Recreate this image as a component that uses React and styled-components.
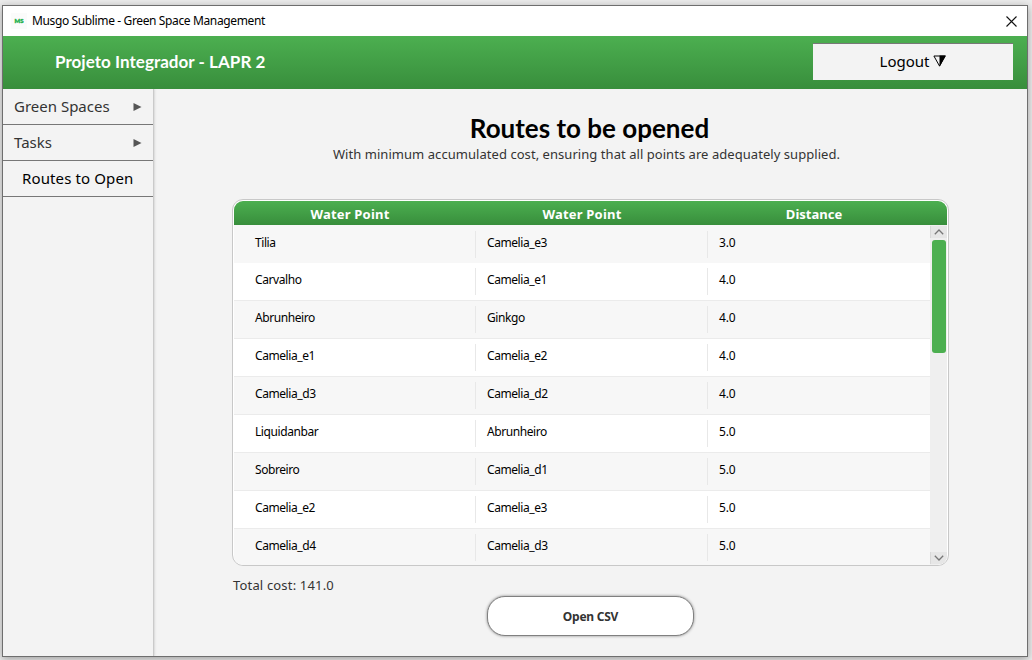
import React from "react";
import styled, { createGlobalStyle } from "styled-components";

const GlobalStyle = createGlobalStyle`
  * { box-sizing: border-box; }
  body {
    margin: 0;
    background: #ececec;
    font-family: "Noto Sans", "Open Sans", sans-serif;
    color: #000;
    overflow: hidden;
  }
`;

const Desktop = styled.div`
  width: 1032px;
  height: 660px;
  padding: 5px 4px 3px 2px;
  overflow: hidden;
`;

const Window = styled.div`
  width: 1026px;
  height: 652px;
  border: 1px solid #6e6e6e;
  background: #f3f3f3;
  box-shadow: 0 2px 8px rgba(0, 0, 0, 0.34);
  display: flex;
  flex-direction: column;
`;

const TitleBar = styled.div`
  height: 30px;
  flex: none;
  background: #fff;
  display: flex;
  align-items: center;
  padding: 0 10px 0 8px;
`;

const AppMark = styled.span`
  width: 16px;
  height: 16px;
  background: #fbfbfb;
  color: #22b04c;
  font: 900 6px/16px Lato, sans-serif;
  -webkit-text-stroke: 0.4px #22b04c;
  text-align: center;
`;

const WindowTitle = styled.span`
  margin-left: 5px;
  font-size: 12px;
  line-height: 16px;
  letter-spacing: -0.37px;
  flex: 1;
  white-space: nowrap;
`;

const Header = styled.header`
  height: 53px;
  flex: none;
  display: flex;
  align-items: center;
  justify-content: space-between;
  padding: 0 14px 0 52px;
  background: linear-gradient(#4caf50, #388e3c);
`;

const Brand = styled.div`
  color: #fff;
  font: 700 17px/22px Lato, sans-serif;
  letter-spacing: 0.04px;
  margin-bottom: 1px;
  white-space: nowrap;
`;

const LogoutButton = styled.button`
  width: 200px;
  height: 37px;
  border: 0;
  border-top: 1px solid #777;
  background: #f3f3f3;
  padding: 0 0 2px;
  margin-bottom: 2px;
  display: flex;
  align-items: center;
  justify-content: center;
  gap: 4px;
  font: 400 15px/20px "Noto Sans", sans-serif;
  color: #000;
`;

const Body = styled.div`
  flex: 1;
  min-height: 0;
  display: flex;
`;

const Sidebar = styled.nav`
  width: 150px;
  flex: none;
  box-shadow: 1px 0 1px #cacaca, 2px 0 2px #dedede;
  clip-path: inset(0 -5px 0 0);
`;

const MenuItem = styled.div`
  height: 36px;
  border-bottom: 1px solid #777;
  display: flex;
  align-items: center;
  justify-content: space-between;
  padding: 0 11px 0 ${(p) => (p.$active ? 19 : 11)}px;
  color: ${(p) => (p.$active ? "#000" : "#333")};
  white-space: nowrap;
`;

const MenuLabel = styled.span`
  margin-bottom: 2px;
  font-size: 15px;
  line-height: 20px;
  letter-spacing: ${(p) => p.$tracking || 0}px;
`;

const Main = styled.main`
  flex: 1;
  padding: 25px 79px 0 79px;
  display: flex;
  flex-direction: column;
`;

const Heading = styled.h1`
  margin: 0 0 0 -2px;
  text-align: center;
  font: 700 26px/29px Lato, sans-serif;
  white-space: nowrap;
`;

const Subtitle = styled.p`
  margin: 1px 0 0 -8px;
  text-align: center;
  font-size: 13px;
  line-height: 20px;
  letter-spacing: 0.05px;
  color: #333;
  white-space: nowrap;
`;

const TableFrame = styled.section`
  width: 717px;
  height: 367px;
  margin-top: 35px;
  border: 1px solid #c8c8c8;
  border-radius: 11px;
  padding: 1px 1px 0;
  background: #fff;
  overflow: hidden;
`;

const TableHead = styled.div`
  height: 24px;
  display: flex;
  border-radius: 9px 9px 0 0;
  background: linear-gradient(#4caf50, #388e3c);
`;

const HeadCell = styled.div`
  width: 232px;
  text-align: center;
  color: #fff;
  font-size: 13px;
  font-weight: 700;
  line-height: 26px;
  letter-spacing: ${(p) => p.$tracking || 0}px;
`;

const TableBody = styled.div`
  height: 340px;
  display: flex;
  overflow: hidden;
  background: #f7f7f7;
  border-radius: 0 0 9px 9px;
`;

const Rows = styled.div`
  width: 696px;
`;

const Row = styled.div`
  height: 38px;
  display: flex;
  padding-top: ${(p) => (p.$first ? 6 : 5)}px;
  background: ${(p) => (p.$odd ? "#fff" : "#f7f7f7")};
  border-bottom: 1px solid ${(p) => (p.$first ? "#f7f7f7" : "#ebebeb")};
`;

const Cell = styled.div`
  width: ${(p) => p.$width}px;
  height: 27px;
  padding-left: ${(p) => p.$indent}px;
  border-right: ${(p) => (p.$last ? "0" : "1px solid #e8e8e8")};
  font-size: 12px;
  line-height: 24px;
  letter-spacing: ${(p) => (p.$last ? -0.2 : -0.42)}px;
`;

const Scrollbar = styled.div`
  width: 17px;
  padding: 1px 0;
  background: #efefef;
  display: flex;
  flex-direction: column;
`;

const ScrollArrow = styled.div`
  height: 12px;
  background: #e6e6e6;
  border-left: 1px solid #d8d8d8;
  display: flex;
  align-items: center;
  justify-content: center;
`;

const Track = styled.div`
  flex: 1;
  padding: 2px 1px 0 2px;
`;

const Thumb = styled.div`
  height: 113px;
  border-radius: 3px;
  background: #4caf50;
`;

const Total = styled.div`
  margin: 9px 0 0 1px;
  height: 20px;
  font-size: 13px;
  line-height: 20px;
  letter-spacing: 0.17px;
  color: #333;
`;

const CsvButton = styled.button`
  width: 207px;
  height: 40px;
  margin: 1px 0 0 255px;
  border: 1px solid #808080;
  border-radius: 18px;
  background: #fff;
  box-shadow: 0 0 3px rgba(0, 0, 0, 0.45);
  color: #333;
  padding: 2px 0 0;
  font: 700 12px/20px "Noto Sans", sans-serif;
  letter-spacing: -0.25px;
`;

const ROUTES = [
  ["Tilia", "Camelia_e3", "3.0"],
  ["Carvalho", "Camelia_e1", "4.0"],
  ["Abrunheiro", "Ginkgo", "4.0"],
  ["Camelia_e1", "Camelia_e2", "4.0"],
  ["Camelia_d3", "Camelia_d2", "4.0"],
  ["Liquidanbar", "Abrunheiro", "5.0"],
  ["Sobreiro", "Camelia_d1", "5.0"],
  ["Camelia_e2", "Camelia_e3", "5.0"],
  ["Camelia_d4", "Camelia_d3", "5.0"],
];

const CloseIcon = () => (
  <svg width="11" height="11" viewBox="0 0 11 11" fill="none" stroke="#111" strokeWidth="1.1">
    <path d="M.5.5l10 10M10.5.5l-10 10" />
  </svg>
);

const HalfTriangle = () => (
  <svg width="13" height="12" viewBox="0 0 13 12">
    <path d="M.9 1h11.200L6.500 11z" fill="none" stroke="#000" strokeWidth="1" />
    <path d="M6.500.5H13L6.500 12z" />
  </svg>
);

const SubmenuArrow = () => (
  <svg width="9" height="8" viewBox="0 0 9 8">
    <path d="M.5 0L8.500 4L.5 8z" fill="#555" />
  </svg>
);

const Chevron = ({ down }) => (
  <svg width="10" height="6" viewBox="0 0 10 6" fill="none" stroke="#777" strokeWidth="1.300">
    <path d={down ? "M.8.8L5 5L9.200.8" : "M.8 5.200L5 1L9.200 5.200"} />
  </svg>
);

export default function App() {
  return (
    <Desktop>
      <GlobalStyle />
      <Window>
        <TitleBar>
          <AppMark>MS</AppMark>
          <WindowTitle>Musgo Sublime - Green Space Management</WindowTitle>
          <CloseIcon />
        </TitleBar>
        <Header>
          <Brand>Projeto Integrador - LAPR 2</Brand>
          <LogoutButton>
            Logout <HalfTriangle />
          </LogoutButton>
        </Header>
        <Body>
          <Sidebar>
            <MenuItem><MenuLabel>Green Spaces</MenuLabel><SubmenuArrow /></MenuItem>
            <MenuItem><MenuLabel>Tasks</MenuLabel><SubmenuArrow /></MenuItem>
            <MenuItem $active><MenuLabel $tracking={0.12}>Routes to Open</MenuLabel></MenuItem>
          </Sidebar>
          <Main>
            <Heading>Routes to be opened</Heading>
            <Subtitle>
              With minimum accumulated cost, ensuring that all points are adequately supplied.
            </Subtitle>
            <TableFrame>
              <TableHead>
                <HeadCell $tracking={0.2}>Water Point</HeadCell>
                <HeadCell $tracking={0.2}>Water Point</HeadCell>
                <HeadCell>Distance</HeadCell>
              </TableHead>
              <TableBody>
                <Rows>
                  {ROUTES.map(([from, to, distance], i) => (
                    <Row key={i} $first={i === 0} $odd={i % 2 === 1}>
                      <Cell $width={242} $indent={21}>{from}</Cell>
                      <Cell $width={232} $indent={11}>{to}</Cell>
                      <Cell $width={222} $indent={11} $last>{distance}</Cell>
                    </Row>
                  ))}
                </Rows>
                <Scrollbar>
                  <ScrollArrow><Chevron /></ScrollArrow>
                  <Track><Thumb /></Track>
                  <ScrollArrow><Chevron down /></ScrollArrow>
                </Scrollbar>
              </TableBody>
            </TableFrame>
            <Total>Total cost: 141.0</Total>
            <CsvButton>Open CSV</CsvButton>
          </Main>
        </Body>
      </Window>
    </Desktop>
  );
}
